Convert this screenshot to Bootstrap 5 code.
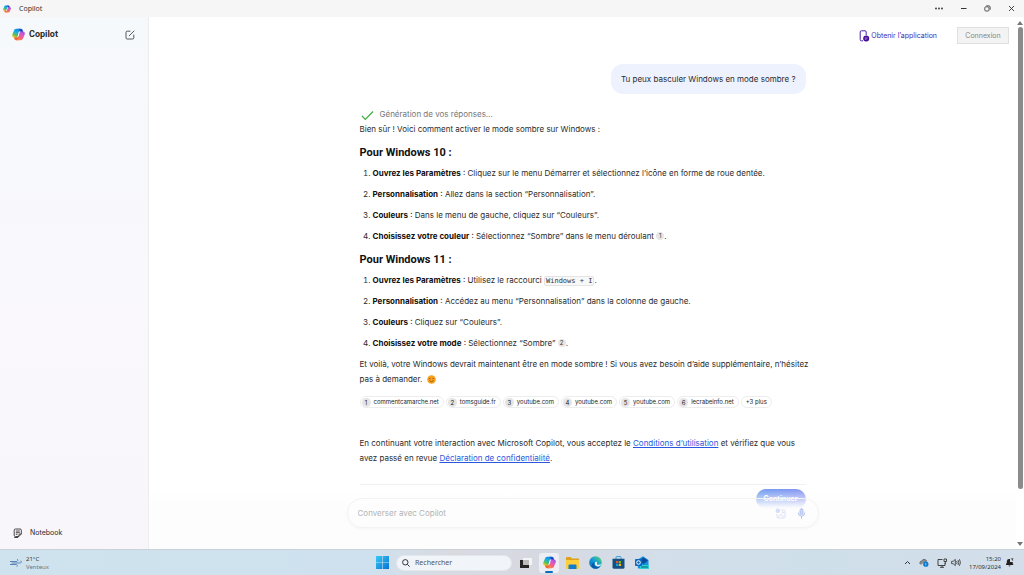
<!DOCTYPE html>
<html lang="fr">
<head>
<meta charset="utf-8">
<meta name="viewport" content="width=device-width, initial-scale=1">
<title>Copilot</title>
<link href="https://cdn.jsdelivr.net/npm/bootstrap@5.3.0/dist/css/bootstrap.min.css" rel="stylesheet">
<style>
  body { font-family: Inter, Roboto, sans-serif; font-size: 8px; line-height: 15px; color: #2b2b2b; background: #fff; }
  svg { display: block; flex: none; }
  button { font: inherit; color: inherit; }
  .bare { border: 0; background: none; padding: 0; }
  .titlebar { height: 17px; background: #f6f6f6; font: 7px/17px "Noto Sans", sans-serif; padding: 0 9px 0 3px; color: #333; }
  .window-tools { gap: 17px; }
  .sidebar { width: 149px; padding: 10px 13px 9px 12px; background: linear-gradient(#f6f9fc, #f9f8fc 50%, #f9f6fb); border-right: 1px solid #ededf0; }
  .brand { font-family: Roboto, sans-serif; font-size: 9px; font-weight: 700; }
  .notebook { font-size: 7px; }
  .topbar { padding: 10px 7px 0 0; gap: 20px; }
  .get-app { color: #4c1fae; font-size: 7px; }
  .connect { width: 52px; height: 17px; border: 1px solid #e0e0e0; background: #f3f3f3; color: #868686; font-size: 7px; line-height: 15px; }
  .thread { width: 100%; max-width: 446px; }
  .bubble { background: #eef2ff; border-radius: 12px; padding: 8px 10px 7px; margin-top: 20px; }
  .status { margin-top: 13px; color: #777; gap: 6px; height: 15px; }
  .answer p { margin: 0; }
  .answer h2 { font-family: Roboto, sans-serif; font-size: 11px; line-height: 15px; font-weight: 700; margin: 8px 0 6px; color: #111; }
  .answer ol { margin: 0; padding-left: 13px; }
  .answer li { line-height: 15px; margin-bottom: 6px; }
  .answer b { color: #111; }
  .answer .closing { margin-right: -8px; }
  .cite { display: inline-block; width: 8px; height: 8px; border-radius: 4px; background: #e6e6e6; font-size: 6px; line-height: 8px; text-align: center; vertical-align: 1px; color: #333; text-decoration: none; }
  .keys { font: 7px/9px "DejaVu Sans Mono", monospace; color: #333; background: #f8f8f8; border: 1px solid #e4e4e4; border-radius: 2px; padding: 0 1px; }
  .smile { display: inline-block; vertical-align: -2px; margin-left: 2px; }
  .sources { gap: 2px; margin-top: 9px; }
  .source { display: flex; align-items: center; height: 12px; border: 1px solid #ededed; border-radius: 6px; padding: 0 4px 0 1px; font-size: 6px; line-height: 10px; color: #222; text-decoration: none; white-space: nowrap; }
  .source span { width: 9px; height: 9px; border-radius: 5px; background: #e4e4e4; margin-right: 3px; text-align: center; line-height: 9px; }
  .source.more { padding: 0 4px; }
  .answer .terms { margin-top: 28px; }
  .terms a { color: #2b56e0; }
  .rule { border-top: 1px solid #f1f1f1; margin-top: 18px; }
  .continue { width: 50px; height: 20px; border: 0; border-radius: 10px; background: linear-gradient(90deg, #6f9cf0, #8794f2); color: #fff; font-weight: 700; font-size: 7px; line-height: 20px; padding: 0; margin-top: 4px; }
  .dock { height: 60px; padding: 9px 0 21px; background: linear-gradient(#fdfdfd00, #fdfdfdf2 18px, #fdfdfd 20px); }
  .composer { width: 100%; max-width: 472px; height: 30px; border: 1px solid #f3f3f3; border-radius: 15px; padding: 0 12px 0 10px; gap: 11px; box-shadow: 0 1px 3px #00000009; }
  .composer input { border: 0; background: none; outline: 0; padding: 0; font-size: 8px; color: #555; }
  .composer input::placeholder { color: #b3b3b3; opacity: 1; }
  .scroller { width: 8px; padding: 4px 2px 3px; gap: 2px; }
  .thumb { width: 5px; border-radius: 3px; background: #8b8b8b; height: 464px; max-height: 88%; }
  .taskbar { height: 26px; border-top: 1px solid #c9d2d8; background: linear-gradient(90deg, #cee3ee, #cfe1ee 36%, #d9dae0 44%, #d7d9e2 53%, #d2dfea 66%, #cfdfe9 80%, #d3deea); font: 7px/8px "Noto Sans", sans-serif; color: #333; padding: 0 10px; }
  .side-zone { flex: 1 1 0; }
  .weather, .clock { font-size: 6px; }
  .apps { gap: 4px; }
  .app { width: 19px; height: 20px; display: flex; align-items: center; justify-content: center; }
  .search { width: 116px; height: 16px; border-radius: 8px; background: #f1f4f8; border: 1px solid #e2e8ee; padding: 0 5px; gap: 5px; }
  .search input { border: 0; background: none; outline: 0; padding: 0; font: 7px/14px "Noto Sans", sans-serif; }
  .search input::placeholder { color: #555; opacity: 1; }
  .current { width: 20px; background: #eceef3; border-radius: 3px; position: relative; }
  .current::after { content: ""; position: absolute; bottom: 0; width: 8px; height: 2px; border-radius: 1px; background: #0b6cc0; }
</style>
</head>
<body class="vh-100 d-flex flex-column overflow-hidden">
<svg width="0" height="0" class="position-absolute" aria-hidden="true">
  <defs>
    <linearGradient id="cool" x1="0.7" y1="0" x2="0.2" y2="1"><stop stop-color="#1683e8"/><stop offset=".4" stop-color="#17b2df"/><stop offset=".68" stop-color="#58bd5a"/><stop offset="1" stop-color="#f4cf22"/></linearGradient>
    <linearGradient id="warm" x1="0.8" y1="0" x2="0.2" y2="1"><stop stop-color="#9a4fe8"/><stop offset=".35" stop-color="#d85bc4"/><stop offset=".65" stop-color="#f4617d"/><stop offset="1" stop-color="#ff8b38"/></linearGradient>
    <symbol id="copilot" viewBox="0 0 24 24">
      <path fill="#1b47c5" d="M12 1.500h4.500c2.200 0 3 1.500 3.500 3.500l1 3.500H13z"/>
      <path fill="#f0643e" d="M12 22.500H7.500c-2.200 0-3-1.500-3.500-3.500l-1-3.500H11z"/>
      <path fill="url(#cool)" d="M15.500 1.500H8C5.500 1.500 4.200 3 3.500 5L.6 12c-1 3 .6 5.500 3.400 5.500h3.800c2 0 3-1 3.600-3l1.900-8C14 4 13.700 2 15.500 1.500z"/>
      <path fill="url(#warm)" d="M8.500 22.500H16c2.500 0 3.800-1.500 4.500-3.500l2.900-7c1-3-.6-5.500-3.400-5.500h-3.800c-2 0-3 1-3.600 3l-1.900 8C10 20 10.300 22 8.500 22.500z"/>
      <path fill="#fff" d="M12.900 6.500h3q-1.300.6-1.900 2.300l-1.700 6q-.7 2.700-3.600 2.700 1.200-.4 1.700-2.300l1.500-5.700q.4-1.900 1-3z"/>
    </symbol>
    <linearGradient id="win" x1="0" y1="0" x2="1" y2="1"><stop stop-color="#38c8f5"/><stop offset="1" stop-color="#0873d2"/></linearGradient>
    <linearGradient id="edge" x1="0" y1="1" x2="1" y2="0"><stop stop-color="#0b5cad"/><stop offset=".5" stop-color="#159bd8"/><stop offset="1" stop-color="#61da64"/></linearGradient>
  </defs>
</svg>

<header class="titlebar d-flex align-items-center justify-content-between flex-shrink-0">
  <div class="d-flex align-items-center gap-2"><svg width="8" height="8"><use href="#copilot"/></svg><span>Copilot</span></div>
  <div class="window-tools d-flex align-items-center">
    <button class="bare" aria-label="Plus d'options"><svg width="8" height="7" viewBox="0 0 8 7" fill="#333"><circle cx="1" cy="3.500" r=".9"/><circle cx="4" cy="3.500" r=".9"/><circle cx="7" cy="3.500" r=".9"/></svg></button>
    <button class="bare" aria-label="Réduire"><svg width="7" height="7" viewBox="0 0 7 7" stroke="#333"><path d="M1 3.500h5.500"/></svg></button>
    <button class="bare" aria-label="Restaurer"><svg width="7" height="7" viewBox="0 0 7 7" fill="none" stroke="#333" stroke-width=".8"><rect x=".8" y="1.800" width="4.200" height="4.200" rx="1"/><path d="M2.300.8h2.400Q6.200.8 6.200 2.300v2.400"/></svg></button>
    <button class="bare" aria-label="Fermer"><svg width="7" height="7" viewBox="0 0 7 7" stroke="#333" stroke-width=".9"><path d="M1 1l5 5M6 1L1 6"/></svg></button>
  </div>
</header>

<div class="d-flex flex-grow-1 overflow-hidden">
  <aside class="sidebar d-flex flex-column justify-content-between flex-shrink-0">
    <div class="d-flex align-items-center justify-content-between">
      <a href="#" class="brand d-flex align-items-center gap-1 text-reset text-decoration-none"><svg width="13" height="13"><use href="#copilot"/></svg>Copilot</a>
      <button class="bare" aria-label="Nouvelle conversation"><svg width="10" height="10" viewBox="0 0 10 10" fill="none" stroke="#444" stroke-width=".9" stroke-linecap="round"><path d="M5 1.200H2.200Q1 1.200 1 2.400v5.400Q1 9 2.200 9h5.400q1.200 0 1.200-1.200V5M4.200 5.800L9 1"/></svg></button>
    </div>
    <a href="#" class="notebook d-flex align-items-center text-reset text-decoration-none gap-2"><svg width="10" height="10" viewBox="0 0 10 10" fill="none" stroke="#333" stroke-width=".9"><path d="M9.300 6V2.200Q9.300 1 8.100 1H3.400Q2.200 1 2.200 2.200v5.100q0 1.200 1.200 1.200H6.800zM9.300 6H8Q6.800 6 6.800 7.200v1.300M3.800 3h4M3.800 4.700h4M3.800 6.300h1.700M2.200 9.500h4"/></svg><span>Notebook</span></a>
  </aside>

  <main class="flex-grow-1 position-relative d-flex flex-column align-items-center overflow-hidden">
    <nav class="topbar w-100 d-flex align-items-center justify-content-end">
      <a href="#" class="get-app d-flex align-items-center text-decoration-none"><svg width="13" height="12" viewBox="0 0 13 12"><path d="M8.200 5V2Q8.200.8 7 .8H3.400Q2.200.8 2.200 2v7.600q0 1.200 1.200 1.200H5" fill="none" stroke="#4b1fab"/><circle cx="8.200" cy="8.600" r="3" fill="#430c9a"/><path d="M6.800 8h2.800M6.800 9.200h1.800" stroke="#d9c9f6" stroke-width=".6"/></svg>Obtenir l’application</a>
      <button class="connect p-0">Connexion</button>
    </nav>

    <section class="thread d-flex flex-column">
      <div class="bubble align-self-end">Tu peux basculer Windows en mode sombre ?</div>
      <div class="status d-flex align-items-center"><svg width="14" height="14" viewBox="0 0 14 14" fill="none" stroke="#3cae3c" stroke-width="1.200"><path d="M2 8l3.300 3.300L13 3.500"/></svg>Génération de vos réponses…</div>
      <article class="answer">
        <p>Bien sûr ! Voici comment activer le mode sombre sur Windows :</p>
        <h2>Pour Windows 10 :</h2>
        <ol>
          <li><b>Ouvrez les Paramètres</b> : Cliquez sur le menu Démarrer et sélectionnez l’icône en forme de roue dentée.</li>
          <li><b>Personnalisation</b> : Allez dans la section “Personnalisation”.</li>
          <li><b>Couleurs</b> : Dans le menu de gauche, cliquez sur “Couleurs”.</li>
          <li><b>Choisissez votre couleur</b> : Sélectionnez “Sombre” dans le menu déroulant <a href="#" class="cite">1</a>.</li>
        </ol>
        <h2>Pour Windows 11 :</h2>
        <ol>
          <li><b>Ouvrez les Paramètres</b> : Utilisez le raccourci <code class="keys">Windows + I</code>.</li>
          <li><b>Personnalisation</b> : Accédez au menu “Personnalisation” dans la colonne de gauche.</li>
          <li><b>Couleurs</b> : Cliquez sur “Couleurs”.</li>
          <li><b>Choisissez votre mode</b> : Sélectionnez “Sombre” <a href="#" class="cite">2</a>.</li>
        </ol>
        <p class="closing">Et voilà, votre Windows devrait maintenant être en mode sombre ! Si vous avez besoin d’aide supplémentaire, n’hésitez pas à demander. <svg class="smile" width="9" height="9" viewBox="0 0 9 9" role="img" aria-label="Sourire"><circle cx="4.500" cy="4.500" r="4.300" fill="#f9a01f"/><path d="M2 3.800q.8-1 1.600 0M5.400 3.800q.8-1 1.600 0M2.300 5.500q2.200 2.600 4.400 0" fill="none" stroke="#7a4310" stroke-width=".7"/></svg></p>
        <div class="sources d-flex">
          <a class="source" href="#"><span>1</span>commentcamarche.net</a>
          <a class="source" href="#"><span>2</span>tomsguide.fr</a>
          <a class="source" href="#"><span>3</span>youtube.com</a>
          <a class="source" href="#"><span>4</span>youtube.com</a>
          <a class="source" href="#"><span>5</span>youtube.com</a>
          <a class="source" href="#"><span>6</span>lecrabeinfo.net</a>
          <a class="source more" href="#">+3 plus</a>
        </div>
        <p class="terms">En continuant votre interaction avec Microsoft Copilot, vous acceptez le <a href="#">Conditions d’utilisation</a> et vérifiez que vous avez passé en revue <a href="#">Déclaration de confidentialité</a>.</p>
      </article>
      <div class="rule"></div>
      <button class="continue align-self-end">Continuer</button>
    </section>

    <div class="dock position-absolute bottom-0 start-0 end-0 d-flex justify-content-center">
      <form class="composer d-flex align-items-center">
        <input class="flex-grow-1" type="text" placeholder="Converser avec Copilot" aria-label="Converser avec Copilot">
        <button type="button" class="bare" aria-label="Ajouter une image"><svg width="11" height="11" viewBox="0 0 11 11" fill="none" stroke="#d5def8" stroke-width=".9"><circle cx="2.800" cy="2.800" r="2.300" fill="#d5def8" stroke="none"/><path d="M6 2h2.800Q10 2 10 3.200v5.600Q10 10 8.800 10H3.200Q2 10 2 8.800V6M2.500 9.500L6 6.500l3.500 3"/><circle cx="7.800" cy="4.300" r=".6"/></svg></button>
        <button type="button" class="bare" aria-label="Micro"><svg width="9" height="11" viewBox="0 0 9 11" fill="none" stroke="#a9b9ed" stroke-width=".9" stroke-linecap="round"><rect x="3" y=".8" width="3" height="5.800" rx="1.500" fill="#cfdbfb"/><path d="M1.300 5q0 3.200 3.200 3.200T7.700 5M4.500 8.400v1.800"/></svg></button>
      </form>
    </div>
  </main>

  <div class="scroller d-flex flex-column align-items-center flex-shrink-0" aria-hidden="true">
    <svg width="6" height="4" viewBox="0 0 6 4"><path d="M3 0l3 4H0z" fill="#777"/></svg>
    <div class="thumb"></div>
    <svg class="mt-auto" width="6" height="4" viewBox="0 0 6 4"><path d="M3 4l3-4H0z" fill="#777"/></svg>
  </div>
</div>

<footer class="taskbar d-flex align-items-center flex-shrink-0">
  <div class="side-zone d-flex align-items-center gap-1">
    <svg width="12" height="9" viewBox="0 0 12 9" fill="none" stroke="#5b86b4" stroke-linecap="round"><path d="M0 3.500h7Q8.500 3 7.600 1.500M2 5h8.500Q12 4.500 11 3M0 6.500h6.500Q8 7 7 8.300"/></svg>
    <div class="weather"><div>21°C</div><div class="text-secondary">Venteux</div></div>
  </div>
  <div class="apps d-flex align-items-center">
    <button class="bare app" aria-label="Démarrer"><svg width="13" height="13" viewBox="0 0 13 13" fill="url(#win)"><path d="M0 0h6.200v6.200H0zM6.800 0H13v6.200H6.800zM0 6.800h6.200V13H0zM6.800 6.800H13V13H6.800z"/></svg></button>
    <label class="search d-flex align-items-center"><svg width="8" height="8" viewBox="0 0 8 8" fill="none" stroke="#333"><circle cx="3.300" cy="3.300" r="2.700"/><path d="M5.400 5.400L7.600 7.600"/></svg><input class="w-100" type="search" placeholder="Rechercher" aria-label="Rechercher"></label>
    <button class="bare app" aria-label="Vue des tâches"><svg width="13" height="12" viewBox="0 0 13 12"><path d="M1 3h9v8H1z" fill="#252525"/><path d="M4 1h9v7H4z" fill="#f4f4f4"/><path d="M4 3h6v5H4z" fill="#bcbcbc"/></svg></button>
    <button class="bare app current" aria-label="Copilot"><svg width="13" height="13"><use href="#copilot"/></svg></button>
    <button class="bare app" aria-label="Explorateur"><svg width="13" height="12" viewBox="0 0 13 12"><path d="M0 1q0-1 1-1h3.500L6 1.500h6q1 0 1 1V11H0z" fill="#e0a21b"/><path d="M0 3h13v8q0 1-1 1H1q-1 0-1-1z" fill="#ffce3d"/><path d="M2.500 8.500q0-1 1-1h6q1 0 1 1V12h-8z" fill="#127dc9"/></svg></button>
    <button class="bare app" aria-label="Edge"><svg width="13" height="13" viewBox="0 0 13 13"><circle cx="6.500" cy="6.500" r="6.300" fill="url(#edge)"/><path d="M5.300 6q-1.300 4 2.500 5 2.500.4 4-1.200Q10 12.800 6.500 12.800 2 12 3 8.500 3.500 6.500 5.300 6z" fill="#0b58a9"/><path d="M6 6.200q1.800-1 2.100.8-.8 1.800 1.500 1.800 1.800 0 2.800-.8-.8 2.600-3.400 2.400Q5.200 10 6 6.200z" fill="#e6f1f6"/></svg></button>
    <button class="bare app" aria-label="Microsoft Store"><svg width="13" height="13" viewBox="0 0 13 13"><path d="M4 3V1.500Q4 .6 5 .6h3q1 0 1 .9V3" fill="none" stroke="#2e9bd9"/><path d="M.5 2.800h12v8.400q0 1.500-1.500 1.500H2Q.5 12.700.5 11.200z" fill="#174f82"/><path d="M4 5h2.200v2.200H4z" fill="#f25022"/><path d="M6.800 5H9v2.200H6.800z" fill="#7fba00"/><path d="M4 7.800h2.200V10H4z" fill="#00a4ef"/><path d="M6.800 7.800H9V10H6.800z" fill="#ffb900"/></svg></button>
    <button class="bare app" aria-label="Outlook"><svg width="14" height="13" viewBox="0 0 14 13"><path d="M2 4l6-3.700L13.500 4v7.500q0 1-1 1H3z" fill="#1490df"/><path d="M4 4.500l4.500-3L13 4.500 8.500 8z" fill="#0a4c9c"/><path d="M5 9h9v4H5z" fill="#2dd1d3"/><path d="M6 11h7" stroke="#0b5e78"/><rect x="0" y="3" width="7" height="7" rx="1" fill="#0f68bd"/><circle cx="3.500" cy="6.500" r="1.800" fill="none" stroke="#fff"/></svg></button>
  </div>
  <div class="side-zone d-flex align-items-center justify-content-end gap-1">
    <svg class="me-1" width="7" height="5" viewBox="0 0 7 5" fill="none" stroke="#333"><path d="M1 4l2.500-2.500L6 4"/></svg>
    <svg class="me-1" width="10" height="9" viewBox="0 0 10 9"><path d="M2 6.500Q.3 5.500 1 4 1.500 3 2.800 3 3.800.6 6 1.500q1.500.5 1.800 2" fill="#8a8f94" stroke="#555" stroke-width=".7"/><circle cx="6.800" cy="6.200" r="2.600" fill="#0879d1"/><path d="M6.800 5v2.400" stroke="#fff" stroke-width=".6"/></svg>
    <svg width="10" height="10" viewBox="0 0 10 10" fill="none" stroke="#333" stroke-width=".9"><path d="M5.500 1.500H1v6h7V5M3 9.300h4M5 7.500v1.800M7 1h2.500v2.500H7zM8.300 3.500V6"/></svg>
    <svg class="me-1" width="10" height="9" viewBox="0 0 10 9" fill="none" stroke="#333" stroke-width=".8"><path d="M.6 3.300h1.600L4.300 1.400v6.200L2.200 5.700H.6zM5.600 3q1 1.500 0 3M7 2q1.800 2.500 0 5M8.400 1.200q2.200 3.300 0 6.600"/></svg>
    <div class="clock text-end"><div>15:20</div><div>17/09/2024</div></div>
    <svg width="9" height="9" viewBox="0 0 9 9" fill="#222"><path d="M1 7V6l.8-1V3.200Q2 1 4 1h1v3h3L7.500 5l.7 1v1zM3.500 7.500h2q-.3 1-1 1t-1-1zM5.500.5h3L7 2.800h1.500"/></svg>
  </div>
</footer>
<script src="https://cdn.jsdelivr.net/npm/bootstrap@5.3.0/dist/js/bootstrap.bundle.min.js"></script>
</body>
</html>
